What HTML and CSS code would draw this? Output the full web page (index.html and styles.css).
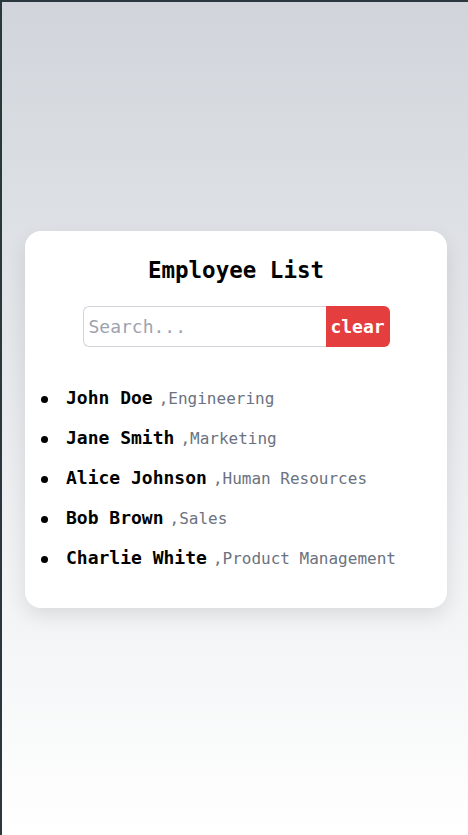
FILE: index.html
```html
<!DOCTYPE html>
<html lang="en">
<head>
<meta charset="utf-8">
<title>Employee List</title>
<link rel="stylesheet" href="styles.css">
</head>
<body>
<main class="page">
  <section class="card">
    <h2 class="title">Employee List</h2>
    <div class="search">
      <input class="search-input" type="text" placeholder="Search...">
      <button class="search-clear" type="button">clear</button>
    </div>
    <ul class="list">
      <li class="item"><span class="name">John Doe</span><span class="dept">,Engineering</span></li>
      <li class="item"><span class="name">Jane Smith</span><span class="dept">,Marketing</span></li>
      <li class="item"><span class="name">Alice Johnson</span><span class="dept">,Human Resources</span></li>
      <li class="item"><span class="name">Bob Brown</span><span class="dept">,Sales</span></li>
      <li class="item"><span class="name">Charlie White</span><span class="dept">,Product Management</span></li>
    </ul>
  </section>
</main>
</body>
</html>
```
FILE: styles.css
```css
* { box-sizing: border-box; }
html, body { margin: 0; padding: 0; }
body {
  font-family: "DejaVu Sans Mono", "Liberation Mono", monospace;
  border-top: 2px solid #2a373d;
  border-left: 2px solid #2a373d;
  background: linear-gradient(to bottom, #d1d5db 0%, #ffffff 100%);
  min-height: 100vh;
}
.page {
  min-height: calc(100vh - 2px);
  display: flex;
  align-items: center;
  padding: 2px 21px 0 23px;
}
.card {
  width: 100%;
  background: #ffffff;
  border-radius: 16px;
  box-shadow: 0 8px 20px rgba(0, 0, 0, 0.1);
  padding: 25px 16px 30px;
}
.title {
  margin: 0;
  text-align: center;
  font-size: 22.5px;
  line-height: 28px;
  font-weight: bold;
  color: #000;
}
.search {
  display: flex;
  justify-content: center;
  margin-top: 22px;
}
.search-input {
  width: 243px;
  height: 41px;
  border: 1px solid #d1d5db;
  border-right: none;
  border-radius: 6px 0 0 6px;
  padding: 0 5px;
  font-family: inherit;
  font-size: 18px;
  color: #111;
  outline: none;
  background: #fff;
}
.search-input::placeholder { color: #9ca3af; }
.search-clear {
  height: 41px;
  width: 64px;
  border: none;
  border-radius: 0 6px 6px 0;
  background: #e53e3e;
  color: #fff;
  font-family: inherit;
  font-size: 18px;
  font-weight: bold;
  padding: 0;
}
.list {
  list-style: none;
  margin: 31px 0 0;
  padding: 0;
}
.item {
  display: flex;
  align-items: baseline;
  height: 40px;
  line-height: 40px;
}
.item::before {
  content: "";
  width: 7px;
  height: 7px;
  border-radius: 50%;
  background: #000;
  margin-right: 18px;
  align-self: center;
  flex: none;
  position: relative;
  top: 1px;
}
.name {
  font-size: 18px;
  font-weight: bold;
  color: #000;
}
.dept {
  font-size: 16px;
  color: #6b7280;
  margin-left: 6px;
}
```
